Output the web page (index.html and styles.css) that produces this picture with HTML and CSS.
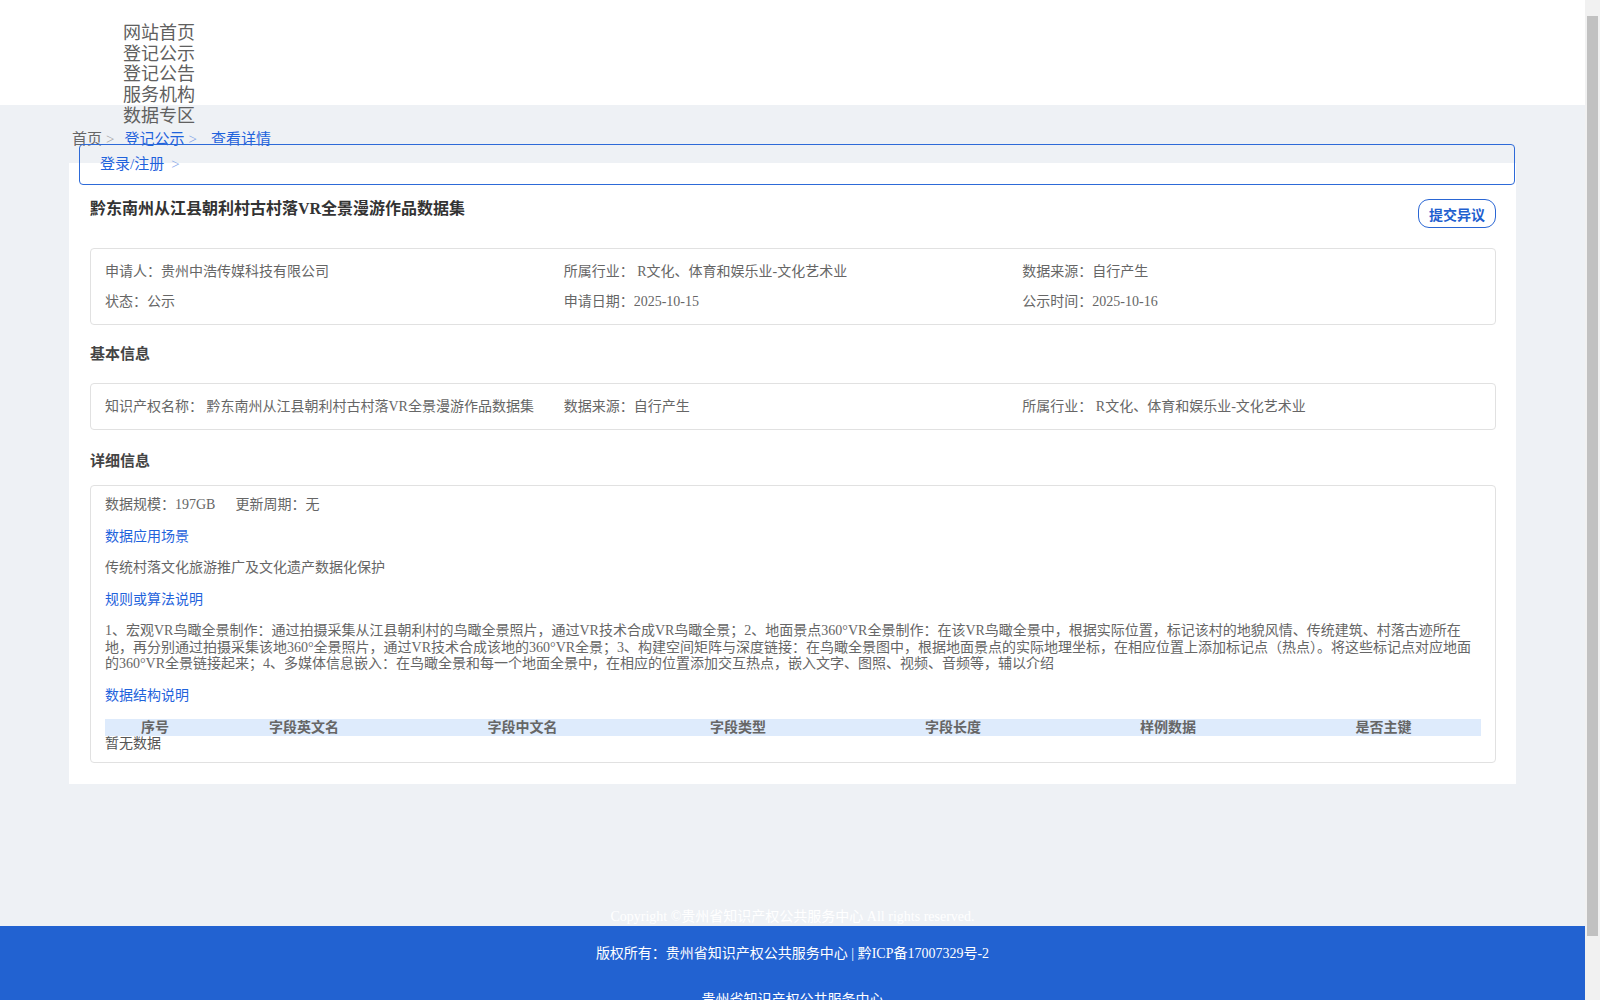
FILE: index.html
```html
<!DOCTYPE html>
<html lang="zh-CN">
<head>
    <meta charset="UTF-8">
    <meta name="viewport" content="width=device-width, initial-scale=1.0">
    <title>查看详情 - 登记公示</title>
    <link rel="stylesheet" href="styles.css">
</head>
<body>

<header class="site-header">
    <ul class="nav">
        <li><a href="#">网站首页</a></li>
        <li><a href="#">登记公示</a></li>
        <li><a href="#">登记公告</a></li>
        <li><a href="#">服务机构</a></li>
        <li><a href="#">数据专区</a></li>
    </ul>
</header>

<div class="page">
    <div class="crumbs">
        <a class="crumb crumb-home" href="#">首页<span class="sep">&gt;</span></a>
        <a class="crumb crumb-link" href="#">登记公示<span class="sep">&gt;</span></a>
        <span class="crumb crumb-current">查看详情</span>
    </div>

    <a class="login-box" href="#">登录/注册<span class="sep">&gt;</span></a>

    <section class="card">
        <div class="title-row">
            <h1>黔东南州从江县朝利村古村落VR全景漫游作品数据集</h1>
            <button class="objection-btn">提交异议</button>
        </div>

        <div class="info-box">
            <div>申请人：贵州中浩传媒科技有限公司</div>
            <div>所属行业： R文化、体育和娱乐业-文化艺术业</div>
            <div>数据来源：自行产生</div>
            <div>状态：公示</div>
            <div>申请日期：2025-10-15</div>
            <div>公示时间：2025-10-16</div>
        </div>

        <h2 class="section-title">基本信息</h2>
        <div class="info-box">
            <div>知识产权名称： 黔东南州从江县朝利村古村落VR全景漫游作品数据集</div>
            <div>数据来源：自行产生</div>
            <div>所属行业： R文化、体育和娱乐业-文化艺术业</div>
        </div>

        <h2 class="section-title section-title-detail">详细信息</h2>
        <div class="detail-box">
            <p>数据规模：197GB<span class="gap"></span>更新周期：无</p>
            <p class="sub-title">数据应用场景</p>
            <p>传统村落文化旅游推广及文化遗产数据化保护</p>
            <p class="sub-title">规则或算法说明</p>
            <p>1、宏观VR鸟瞰全景制作：通过拍摄采集从江县朝利村的鸟瞰全景照片，通过VR技术合成VR鸟瞰全景；2、地面景点360°VR全景制作：在该VR鸟瞰全景中，根据实际位置，标记该村的地貌风情、传统建筑、村落古迹所在地，再分别通过拍摄采集该地360°全景照片，通过VR技术合成该地的360°VR全景；3、构建空间矩阵与深度链接：在鸟瞰全景图中，根据地面景点的实际地理坐标，在相应位置上添加标记点（热点）。将这些标记点对应地面的360°VR全景链接起来；4、多媒体信息嵌入：在鸟瞰全景和每一个地面全景中，在相应的位置添加交互热点，嵌入文字、图照、视频、音频等，辅以介绍</p>
            <p class="sub-title">数据结构说明</p>
            <table class="field-table">
                <thead>
                    <tr>
                        <th class="col-no">序号</th>
                        <th class="col-en">字段英文名</th>
                        <th class="col-cn">字段中文名</th>
                        <th class="col-type">字段类型</th>
                        <th class="col-len">字段长度</th>
                        <th class="col-sample">样例数据</th>
                        <th class="col-key">是否主键</th>
                    </tr>
                </thead>
            </table>
            <div class="empty">暂无数据</div>
        </div>
    </section>

    <p class="copyright">Copyright ©贵州省知识产权公共服务中心 All rights reserved.</p>
</div>

<footer class="site-footer">
    <p>版权所有：贵州省知识产权公共服务中心 | 黔ICP备17007329号-2</p>
    <p>贵州省知识产权公共服务中心</p>
</footer>

</body>
</html>
```

FILE: styles.css
```css
/* the document keeps a 15px scroll rail on the right */
html {
    overflow-y: scroll;
    background-color: #f1f1f1;
    background-image: linear-gradient(to right, #f1f1f1 2px, #c1c1c1 2px, #c1c1c1 13px, #f1f1f1 13px);
    background-repeat: no-repeat;
    background-size: 15px 920px;
    background-position: right 0 top 16px;
}

::-webkit-scrollbar {
    width: 15px;
    background-color: #f1f1f1;
}

::-webkit-scrollbar-thumb {
    background-color: #c1c1c1;
    border-left: 2px solid #f1f1f1;
    border-right: 2px solid #f1f1f1;
}

body {
    width: 1585px;
    margin: 0;
    background-color: #eef1f5;
    font-family: "Liberation Serif", "Noto Sans CJK SC", serif;
    font-size: 14px;
    line-height: 1.15;
    color: #666;
}

a {
    text-decoration: none;
}

/* top bar */
.site-header {
    height: 105px;
    background-color: #ffffff;
}

.nav {
    list-style: none;
    margin: 0;
    padding: 23px 0 0 123px;
    font-size: 18px;
    line-height: 20.7px;
}

.nav a {
    color: #606060;
}

/* main column */
.page {
    position: relative;
    width: 1447px;
    margin: 0 auto;
    padding-top: 26px;
}

.crumbs {
    display: flex;
    padding-left: 3px;
    font-size: 15px;
    line-height: 17px;
}

.crumb .sep {
    margin: 0 10px 0 4px;
    opacity: 0.55;
}

.crumb-home {
    color: #666;
}

.crumb-link {
    color: #1f63dc;
}

.crumb-current {
    margin-left: 4px;
    color: #1f63dc;
}

.login-box {
    position: absolute;
    top: 39px;
    left: 10px;
    right: 1px;
    height: 39px;
    padding-left: 20px;
    border: 1px solid #2d6ad8;
    border-radius: 4px;
    font-size: 15px;
    line-height: 39px;
    color: #1f63dc;
}

.login-box .sep {
    margin-left: 7px;
    opacity: 0.55;
}

.card {
    margin-top: 15px;
    padding: 36px 20px 21px 21px;
    background-color: #ffffff;
}

.title-row {
    display: flex;
    justify-content: space-between;
    align-items: flex-start;
    margin-bottom: 20px;
}

.title-row h1 {
    margin: 0;
    padding-top: 1px;
    font-size: 16px;
    line-height: 18px;
    font-weight: bold;
    color: #333;
}

.objection-btn {
    padding: 0 10px;
    height: 29px;
    background-color: #ffffff;
    border: 1px solid #2a66d4;
    border-radius: 11px;
    font-family: inherit;
    font-size: 14px;
    font-weight: bold;
    color: #1f5fcf;
    cursor: pointer;
}

.info-box {
    display: grid;
    grid-template-columns: repeat(3, 1fr);
    padding: 8px 14px 7px;
    border: 1px solid #e1e1e1;
    border-radius: 4px;
    line-height: 30px;
}

.section-title {
    margin: 21px 0 20px;
    font-size: 15px;
    line-height: 17px;
    font-weight: bold;
    color: #444;
}

.section-title-detail {
    margin: 23px 0 15px;
}

.detail-box {
    padding: 11px 14px 9px;
    border: 1px solid #e1e1e1;
    border-radius: 4px;
    line-height: 16.5px;
}

.detail-box p {
    margin: 0 0 15px;
}

.detail-box .gap {
    display: inline-block;
    width: 20px;
}

.sub-title {
    color: #1f63dc;
}

.field-table {
    width: 100%;
    table-layout: fixed;
    border-collapse: collapse;
    background-color: #deebfc;
}

.field-table th {
    padding: 0;
    font-weight: bold;
    line-height: 17px;
    text-align: center;
    color: #666;
}

.col-no { width: 100px; }
.col-en { width: 198px; }
.col-cn { width: 239px; }
.col-type { width: 192px; }
.col-len { width: 238px; }
.col-sample { width: 192px; }
.col-key { padding-left: 22px !important; }

.empty {
    line-height: 16.5px;
    color: #555;
}

.copyright {
    margin: 125px 0 1px;
    line-height: 16px;
    text-align: center;
    color: #ffffff;
}

/* bottom bar */
.site-footer {
    padding: 20px 0 46px;
    background-color: #2262d1;
    color: #ffffff;
    text-align: center;
}

.site-footer p {
    margin: 0;
    line-height: 16px;
}

.site-footer p + p {
    margin-top: 30px;
}
```
